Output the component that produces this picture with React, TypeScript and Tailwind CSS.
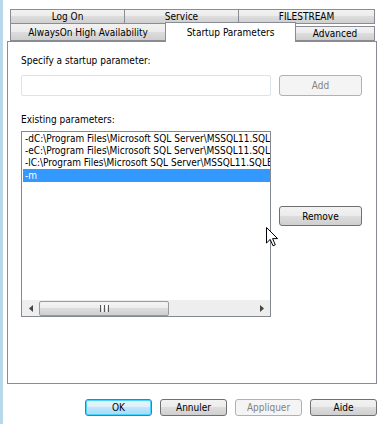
const btn =
  'flex items-center justify-center rounded-[3px] border border-[#707070] bg-[linear-gradient(#f2f2f2_0%,#ebebeb_50%,#dddddd_50%,#cfcfcf_100%)] text-black'

const tabBase =
  'flex items-center justify-center border border-[#898c95] bg-[linear-gradient(#f2f2f2_0%,#ebebeb_50%,#dddddd_50%,#cfcfcf_100%)] text-black'

const rows = [
  '-dC:\\Program Files\\Microsoft SQL Server\\MSSQL11.SQLEXPRESS\\MSSQL\\DATA\\master.mdf',
  '-eC:\\Program Files\\Microsoft SQL Server\\MSSQL11.SQLEXPRESS\\MSSQL\\Log\\ERRORLOG',
  '-lC:\\Program Files\\Microsoft SQL Server\\MSSQL11.SQLEXPRESS\\MSSQL\\DATA\\mastlog.ldf',
]

function Cursor() {
  return (
    <svg width="13" height="20" viewBox="0 0 13 20" className="absolute left-[266px] top-[227px]">
      <path d="M0.5 0.5 L0.5 16 L4.2 12.4 L7 18.8 L9.3 17.8 L6.6 11.6 L11.6 11.6 Z" fill="#fff" stroke="#000" strokeWidth="1" />
    </svg>
  )
}

export default function App() {
  return (
    <div className="relative flex h-[424px] w-[382px] bg-white font-['DejaVu_Sans_Condensed','DejaVu_Sans',sans-serif] text-[10px] text-black">
      <div className="w-[3px] bg-[#b9d8ec]" />
      <div className="flex flex-1 flex-col pl-[4px] pt-[9px]">
        {/* tab headers */}
        <div className="flex flex-col pl-[3px]">
          <div className="flex h-[15px]">
            <div className={`${tabBase} w-[115px]`}>Log On</div>
            <div className={`${tabBase} -ml-px w-[115px]`}>Service</div>
            <div className={`${tabBase} -ml-px w-[137px]`}>FILESTREAM</div>
          </div>
          <div className="-mt-px flex h-[18px] items-end">
            <div className={`${tabBase} h-[18px] w-[156px]`}>AlwaysOn High Availability</div>
            <div className="relative z-10 -mb-px -ml-px flex h-[20px] w-[131px] items-start justify-center border border-b-0 border-[#898c95] bg-white pt-[2px]">
              Startup Parameters
            </div>
            <div className={`${tabBase} -ml-px h-[15px] w-[80px]`}>Advanced</div>
          </div>
        </div>

        {/* panel */}
        <div className="flex h-[343px] w-[370px] flex-col border border-[#898c95] pl-[13px] pt-[12px]">
          <div className="leading-[13px]">Specify a startup parameter:</div>
          <div className="mt-[8px] flex h-[21px] items-center">
            <div className="h-[21px] w-[250px] rounded-[2px] border border-[#dde3ea] bg-white" />
            <div className="ml-[8px] flex h-[21px] w-[83px] items-center justify-center rounded-[3px] border border-[#adb2b5] bg-[#f4f4f4] text-[#838383]">
              Add
            </div>
          </div>
          <div className="mt-[17px] leading-[13px]">Existing parameters:</div>
          <div className="flex">
            <div className="mt-[5px] flex h-[186px] w-[250px] flex-col overflow-hidden border border-[#828790] bg-white">
              <div className="flex-1 overflow-hidden pl-px pt-px">
                {rows.map((r) => (
                  <div key={r} className="h-[12px] overflow-hidden whitespace-nowrap pl-[2px] leading-[12px]">
                    {r}
                  </div>
                ))}
                <div className="h-[13px] bg-[#3399ff] pl-[2px] leading-[13px] text-white">-m</div>
              </div>
              <div className="flex h-[16px] items-center bg-[#eeeeee]">
                <div className="flex w-[17px] justify-center">
                  <svg width="4" height="7" viewBox="0 0 4 7">
                    <path d="M4 0 L0 3.5 L4 7 Z" fill="#444" />
                  </svg>
                </div>
                <div className="flex h-[15px] w-[130px] items-center justify-center rounded-[2px] border border-[#9a9a9a] bg-[linear-gradient(#f4f4f4_0%,#ececec_50%,#dcdcdc_50%,#d0d0d0_100%)]">
                  <div className="flex gap-[1px]">
                    <div className="h-[7px] w-[1px] bg-[#555]" />
                    <div className="h-[7px] w-[1px] bg-[#fff]" />
                    <div className="h-[7px] w-[1px] bg-[#555]" />
                    <div className="h-[7px] w-[1px] bg-[#fff]" />
                    <div className="h-[7px] w-[1px] bg-[#555]" />
                  </div>
                </div>
                <div className="flex-1" />
                <div className="flex w-[17px] justify-center">
                  <svg width="4" height="7" viewBox="0 0 4 7">
                    <path d="M0 0 L4 3.5 L0 7 Z" fill="#444" />
                  </svg>
                </div>
              </div>
            </div>
            <div className={`${btn} ml-[8px] mt-[80px] h-[20px] w-[83px]`}>Remove</div>
          </div>
        </div>

        {/* bottom buttons */}
        <div className="mt-[15px] flex h-[17px] justify-end gap-[8px] pr-[5px]">
          <div className="flex h-[17px] w-[67px] items-center justify-center rounded-[3px] border border-[#3c7fb1] bg-[linear-gradient(#eaf6fd_0%,#d9f0fc_50%,#bee6fd_50%,#a7d9f5_100%)] shadow-[inset_0_0_0_1px_#48d5fd]">
            OK
          </div>
          <div className={`${btn} h-[17px] w-[67px]`}>Annuler</div>
          <div className="flex h-[17px] w-[67px] items-center justify-center rounded-[3px] border border-[#adb2b5] bg-[#f4f4f4] text-[#838383]">
            Appliquer
          </div>
          <div className={`${btn} h-[17px] w-[67px]`}>Aide</div>
        </div>
      </div>
      <Cursor />
    </div>
  )
}
